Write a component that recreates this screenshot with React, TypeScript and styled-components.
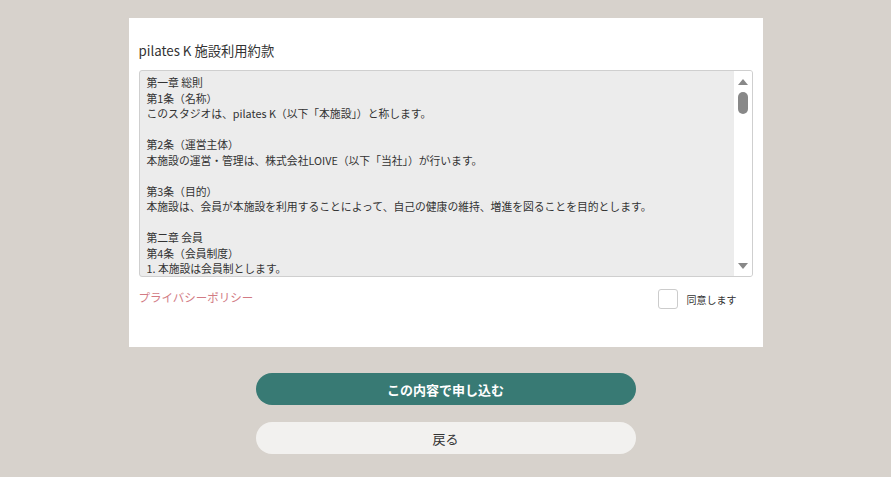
import React from 'react';
import styled, { createGlobalStyle } from 'styled-components';

const GlobalStyle = createGlobalStyle`
  html, body {
    margin: 0;
    padding: 0;
    background: #d7d2cc;
  }
  body {
    font-family: "Noto Sans CJK JP", "Noto Sans", sans-serif;
    color: #333;
  }
`;

const Page = styled.main`
  display: flex;
  flex-direction: column;
  align-items: center;
  min-height: 477px;
  padding-top: 18px;
  box-sizing: border-box;
`;

const Card = styled.section`
  width: 634px;
  box-sizing: border-box;
  background: #fff;
  padding: 22px 10px 38px 10px;
`;

const Title = styled.h1`
  margin: 0 0 8px 0;
  font-size: 13.3px;
  font-weight: 400;
  line-height: 22px;
  color: #333;
`;

const TermsBox = styled.div`
  display: flex;
  height: 207px;
  box-sizing: border-box;
  border: 1px solid #cfcfcf;
  border-radius: 3px;
  background: #ececec;
  overflow: hidden;
`;

const TermsText = styled.div`
  flex: 1;
  padding: 4px 7px;
  font-size: 10.8px;
  line-height: 15.5px;
  color: #333;
  overflow: hidden;
  white-space: pre-line;
`;

const ScrollTrack = styled.div`
  width: 18px;
  flex: none;
  display: flex;
  flex-direction: column;
  align-items: center;
  background: #fff;
  padding: 8px 0 7px;
  box-sizing: border-box;
`;

const Arrow = styled.span<{ $down?: boolean }>`
  width: 0;
  height: 0;
  border-left: 5px solid transparent;
  border-right: 5px solid transparent;
  ${({ $down }) =>
    $down
      ? 'border-top: 6px solid #888;'
      : 'border-bottom: 6px solid #888;'}
`;

const Thumb = styled.span`
  width: 10px;
  height: 22px;
  margin-top: 7px;
  border-radius: 5px;
  background: #888;
`;

const Spacer = styled.span`
  flex: 1;
`;

const Footer = styled.div`
  display: flex;
  justify-content: space-between;
  align-items: center;
  margin-top: 12px;
  padding-right: 16px;
`;

const PolicyLink = styled.a`
  font-size: 11.5px;
  line-height: 16px;
  color: #d27b84;
  text-decoration: none;
  cursor: pointer;
  align-self: flex-start;
`;

const AgreeLabel = styled.label`
  display: flex;
  align-items: center;
  gap: 9px;
  margin-left: 1px;
  font-size: 10px;
  color: #333;
`;

const CheckBox = styled.span`
  width: 20px;
  height: 20px;
  box-sizing: border-box;
  border: 1px solid #ccc;
  border-radius: 3px;
  background: #fff;
`;

const Actions = styled.div`
  display: flex;
  flex-direction: column;
  gap: 17px;
  margin-top: 26px;
`;

const Button = styled.button<{ $primary?: boolean }>`
  width: 380px;
  height: 32px;
  border: none;
  border-radius: 16px;
  font-family: inherit;
  font-size: 13px;
  font-weight: ${({ $primary }) => ($primary ? 700 : 400)};
  color: ${({ $primary }) => ($primary ? '#fff' : '#333')};
  background: ${({ $primary }) => ($primary ? '#387a74' : '#f2f1ef')};
  cursor: pointer;
`;

const terms = `第一章 総則
第1条（名称）
このスタジオは、pilates K（以下「本施設」）と称します。

第2条（運営主体）
本施設の運営・管理は、株式会社LOIVE（以下「当社」）が行います。

第3条（目的）
本施設は、会員が本施設を利用することによって、自己の健康の維持、増進を図ることを目的とします。

第二章 会員
第4条（会員制度）
1. 本施設は会員制とします。`;

export default function App() {
  return (
    <>
      <GlobalStyle />
      <Page>
        <Card>
          <Title>pilates K 施設利用約款</Title>
          <TermsBox>
            <TermsText>{terms}</TermsText>
            <ScrollTrack>
              <Arrow />
              <Thumb />
              <Spacer />
              <Arrow $down />
            </ScrollTrack>
          </TermsBox>
          <Footer>
            <PolicyLink>プライバシーポリシー</PolicyLink>
            <AgreeLabel>
              <CheckBox />
              同意します
            </AgreeLabel>
          </Footer>
        </Card>
        <Actions>
          <Button $primary>この内容で申し込む</Button>
          <Button>戻る</Button>
        </Actions>
      </Page>
    </>
  );
}
